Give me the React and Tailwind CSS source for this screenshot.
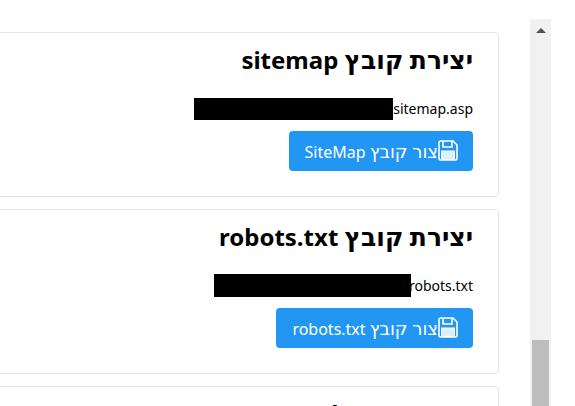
import React from 'react'

function SaveIcon() {
  return (
    <svg width="20" height="21" viewBox="0 0 20 21" fill="none" stroke="currentColor" strokeWidth="1.6" className="-mt-px shrink-0">
      <path d="M2 1h13l4 4v13.5a1.5 1.5 0 0 1-1.5 1.5h-15a1.5 1.5 0 0 1-1.5-1.5v-16a1.5 1.5 0 0 1 1.5-1.5z" />
      <path d="M5 1v6h9v-6" />
      <rect x="3.5" y="11" width="13" height="8.5" fill="currentColor" fillOpacity="0.85" strokeWidth="1" />
    </svg>
  )
}

function Card({ title, path, barClass, label }) {
  return (
    <div className="h-[165px] shrink-0 rounded border border-[#e5e5e5] bg-white pt-[10px] pr-[25px]">
      <h2 className="h-[32px] text-[24px] leading-[32px] font-bold text-black">
        <span className="text-[25px]">יצירת קובץ</span> {title}
      </h2>
      {path && (
        <div className="mt-[23px] flex h-[22px] items-end text-[14px] leading-[22px]">
          <span>{path}</span>
          <div className={barClass} />
        </div>
      )}
      {label && (
        <button className="mt-[11px] flex h-[40px] items-center rounded bg-[#2196f3] pr-[15px] pl-[16px] text-[16px] leading-[24px] text-white">
          <SaveIcon />
          <span className="-mt-px h-[24px]">
            <span className="text-[18px]">צור קובץ</span> {label}
          </span>
        </button>
      )}
    </div>
  )
}

export default function App() {
  return (
    <div dir="rtl" className="flex h-[406px] w-[575px] overflow-hidden bg-white font-['Noto_Sans','DejaVu_Sans',sans-serif] text-black">
      <div className="mt-[19px] mr-[24px] ml-[31px] flex h-[387px] w-[21px] shrink-0 flex-col items-center bg-[#f1f1f1]">
        <div className="mt-[9px] h-0 w-0 border-x-[5px] border-b-[5px] border-x-transparent border-b-[#505050]" />
        <div className="mt-[307px] h-[70px] w-[17px] bg-[#bdbdbd]" />
      </div>
      <div className="flex w-[520px] shrink-0 flex-col gap-[12px] pt-[32px]">
        <Card title="sitemap" path="sitemap.asp" barClass="h-[22px] w-[199px] bg-black" label="SiteMap" />
        <Card title="robots.txt" path="robots.txt" barClass="relative -mr-[2px] h-[23px] w-[197px] bg-black" label="robots.txt" />
        <Card title="Tag Feed" />
      </div>
    </div>
  )
}
